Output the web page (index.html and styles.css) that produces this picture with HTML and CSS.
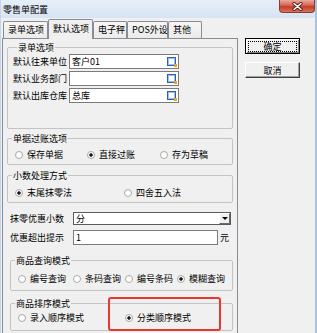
FILE: index.html
```html
<!DOCTYPE html>
<html lang="zh-CN">
<head>
  <meta charset="UTF-8" />
  <title>零售单配置</title>
  <link rel="stylesheet" href="styles.css">
</head>
<body>

  <div class="window">
    <div class="titlebar">
      <span class="title">零售单配置</span>
      <span class="close">
        <svg width="11" height="9" viewBox="0 0 11 9">
          <path d="M2 1.5 L9 7.5 M9 1.5 L2 7.5" stroke="#4a1a12" stroke-width="3.2" stroke-linecap="round" />
          <path d="M2 1.5 L9 7.5 M9 1.5 L2 7.5" stroke="#fff" stroke-width="1.6" stroke-linecap="round" />
        </svg>
      </span>
    </div>

    <div class="main">
      <div class="tabs-area">
        <div class="tabstrip">
          <div class="tab">录单选项</div>
          <div class="tab active">默认选项</div>
          <div class="tab">电子秤</div>
          <div class="tab">POS外设</div>
          <div class="tab">其他</div>
        </div>

        <div class="panel">
          <fieldset class="group group-entry">
            <legend>录单选项</legend>
            <div class="field">
              <label>默认往来单位</label>
              <div class="picker"><span>客户01</span><svg class="pick-icon" width="10" height="10"><rect x="0.5" y="0.5" width="8" height="8" fill="#9cc0ea" stroke="#2e5fae" /><rect x="2" y="2" width="5" height="5" fill="#fff" /><rect x="7" y="7" width="3" height="3" fill="#e9a22a" /></svg></div>
            </div>
            <div class="field">
              <label>默认业务部门</label>
              <div class="picker"><span></span><svg class="pick-icon" width="10" height="10"><rect x="0.5" y="0.5" width="8" height="8" fill="#9cc0ea" stroke="#2e5fae" /><rect x="2" y="2" width="5" height="5" fill="#fff" /><rect x="7" y="7" width="3" height="3" fill="#e9a22a" /></svg></div>
            </div>
            <div class="field">
              <label>默认出库仓库</label>
              <div class="picker"><span>总库</span><svg class="pick-icon" width="10" height="10"><rect x="0.5" y="0.5" width="8" height="8" fill="#9cc0ea" stroke="#2e5fae" /><rect x="2" y="2" width="5" height="5" fill="#fff" /><rect x="7" y="7" width="3" height="3" fill="#e9a22a" /></svg></div>
            </div>
          </fieldset>

          <fieldset class="group group-post">
            <legend>单据过账选项</legend>
            <div class="radios cols-post">
              <span class="radio">保存单据</span>
              <span class="radio checked">直接过账</span>
              <span class="radio">存为草稿</span>
            </div>
          </fieldset>

          <fieldset class="group group-decimal">
            <legend>小数处理方式</legend>
            <div class="radios cols-decimal">
              <span class="radio checked">末尾抹零法</span>
              <span class="radio">四舍五入法</span>
            </div>
          </fieldset>

          <div class="line-field round-row">
            <label>抹零优惠小数</label>
            <div class="combo"><span>分</span><span class="combo-btn"></span></div>
          </div>

          <div class="line-field limit-row">
            <label>优惠超出提示</label>
            <div class="text-input">1</div>
            <span class="unit">元</span>
          </div>

          <fieldset class="group group-query">
            <legend>商品查询模式</legend>
            <div class="radios cols-query">
              <span class="radio">编号查询</span>
              <span class="radio">条码查询</span>
              <span class="radio">编号条码</span>
              <span class="radio checked">模糊查询</span>
            </div>
          </fieldset>

          <div class="sort-wrap">
            <fieldset class="group group-sort">
              <legend>商品排序模式</legend>
              <div class="radios cols-sort">
                <span class="radio">录入顺序模式</span>
                <span class="radio checked">分类顺序模式</span>
              </div>
            </fieldset>
            <div class="highlight"></div>
          </div>
        </div>
      </div>

      <div class="buttons">
        <button class="btn default"><span>确定</span></button>
        <button class="btn">取消</button>
      </div>
    </div>
  </div>

</body>
</html>
```

FILE: styles.css
```css
body {
  margin: 0;
  background-color: #f0f0f0;
  font-family: "Noto Sans CJK SC", "DejaVu Sans", sans-serif;
  font-size: 9px;
  line-height: 11px;
  color: #000;
}

.window {
  width: 317px;
  height: 333px;
  overflow: hidden;
  box-sizing: border-box;
  border-left: 1px solid #c2d5ec;
  border-right: 2px solid #a9c3e2;
  background-color: #f0f0f0;
}

.titlebar {
  height: 18px;
  display: flex;
  justify-content: space-between;
  align-items: flex-start;
  background: linear-gradient(#e6eef8, #d8e4f2);
}

.title {
  padding: 4px 0 0 2px;
}

.close {
  width: 36px;
  height: 13px;
  box-sizing: border-box;
  display: flex;
  align-items: center;
  justify-content: center;
  border: 1px solid #8c3b30;
  border-top: none;
  border-radius: 0 0 4px 4px;
  background: linear-gradient(#eaaa9f, #d66450 45%, #c23d28 55%, #d8735f);
}

.main {
  display: flex;
}

.tabs-area {
  width: 236px;
  margin-left: 1px;
}

.tabstrip {
  display: grid;
  grid-template-columns: 45px 45px 34px 41px 34px;
  height: 20px;
  align-items: end;
  padding-left: 1px;
}

.tab {
  height: 17px;
  box-sizing: border-box;
  border: 1px solid #898c95;
  border-bottom: none;
  border-radius: 2px 2px 0 0;
  padding: 2px 0 0 4px;
  background: linear-gradient(#f6f6f6, #ebebeb);
  white-space: nowrap;
}

.tab.active {
  height: 20px;
  margin-bottom: -1px;
  padding-top: 3px;
  background: #f0f0f0;
  position: relative;
  z-index: 1;
}

.panel {
  height: 320px;
  box-sizing: border-box;
  border: 1px solid #898c95;
  padding: 3px 4px 0;
}

.group {
  margin: 0;
  padding: 0;
  min-width: 0;
  border: 1px solid #c3c3c3;
  border-radius: 2px;
}

.group legend {
  margin-left: 4px;
  padding: 0 1px;
  line-height: 11px;
}

.group-entry {
  padding: 1px 0 25px 5px;
}

.group-post {
  margin-top: 4px;
  padding: 5px 0 4px;
}

.group-decimal {
  margin-top: 5px;
  padding: 6px 0 4px;
}

.group-query {
  margin: 10px 0 0 3px;
  padding: 7px 0 6px;
}

.group-sort {
  margin-left: 3px;
  padding: 3px 0 7px;
}

.field {
  display: flex;
  align-items: center;
  height: 15px;
}

.field + .field {
  margin-top: 2px;
}

.field label {
  width: 56px;
  white-space: nowrap;
}

.picker {
  width: 110px;
  height: 15px;
  box-sizing: border-box;
  display: flex;
  align-items: center;
  justify-content: space-between;
  padding: 0 1px 0 2px;
  border: 1px solid #7a7a7a;
  background-color: #fff;
}

.pick-icon {
  display: block;
}

.radios {
  display: grid;
  height: 11px;
  padding-left: 7px;
}

.cols-post {
  grid-template-columns: 72px 73px auto;
}

.cols-decimal {
  grid-template-columns: 109px auto;
}

.cols-query {
  grid-template-columns: 55px 52px 52px auto;
}

.cols-sort {
  grid-template-columns: 107px auto;
}

.radio {
  display: flex;
  align-items: center;
  gap: 4px;
  white-space: nowrap;
}

.radio::before {
  content: "";
  width: 8px;
  height: 8px;
  box-sizing: border-box;
  flex: none;
  border: 1px solid #a9a9a9;
  border-radius: 50%;
  background-color: #fff;
}

.radio.checked::before {
  background: radial-gradient(circle, #1a1a1a 0 1.4px, #fff 2px);
}

.line-field {
  display: flex;
  align-items: center;
  margin-left: 3px;
}

.line-field label {
  width: 63px;
  white-space: nowrap;
}

.round-row {
  margin-top: 9px;
}

.limit-row {
  margin-top: 5px;
}

.combo {
  width: 158px;
  height: 13px;
  box-sizing: border-box;
  display: flex;
  align-items: center;
  justify-content: space-between;
  padding-left: 2px;
  border: 1px solid #5a5a5a;
  background-color: #fff;
}

.combo-btn {
  width: 11px;
  height: 11px;
  box-sizing: border-box;
  display: flex;
  align-items: center;
  justify-content: center;
  border: 1px solid;
  border-color: #fff #6a6a6a #6a6a6a #fff;
  background-color: #f0f0f0;
}

.combo-btn::after {
  content: "";
  border-left: 3px solid transparent;
  border-right: 3px solid transparent;
  border-top: 3px solid #000;
}

.text-input {
  width: 145px;
  height: 15px;
  box-sizing: border-box;
  padding-left: 2px;
  border: 1px solid #7a7a7a;
  background-color: #fff;
  line-height: 13px;
}

.unit {
  margin-left: 2px;
}

.sort-wrap {
  position: relative;
  margin-top: 7px;
}

.highlight {
  position: absolute;
  left: 101px;
  top: -1px;
  width: 113px;
  height: 34px;
  box-sizing: border-box;
  border: 2px solid #e8382e;
  border-radius: 3px;
}

.buttons {
  display: flex;
  flex-direction: column;
  gap: 8px;
  padding-top: 20px;
  margin-left: 7px;
}

.btn {
  width: 55px;
  height: 16px;
  padding: 0;
  font: inherit;
  color: #000;
  background-color: #f0f0f0;
  border: 1px solid;
  border-color: #fff #404040 #404040 #fff;
  box-shadow: inset -1px -1px 0 #a0a0a0;
}

.btn.default {
  border-color: #000;
  box-shadow: inset 1px 1px 0 #fff, inset -1px -1px 0 #808080;
}

.btn.default span {
  display: block;
  margin: 1px 2px;
  border: 1px dotted #000;
  line-height: 9px;
}
```
